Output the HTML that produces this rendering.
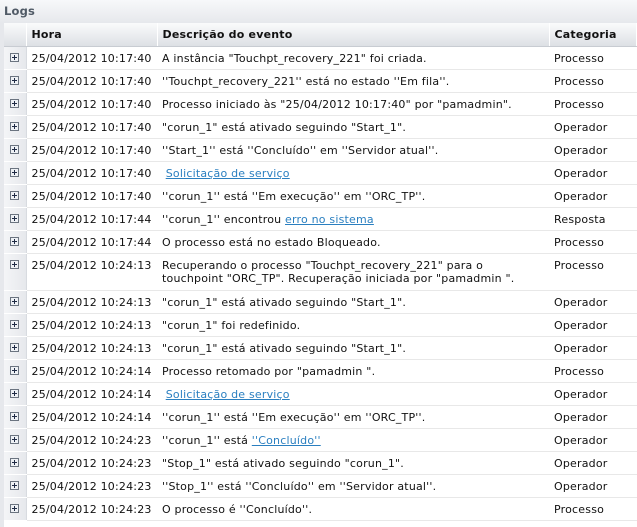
<!DOCTYPE html><html><head><style>
body{margin:0;width:637px;height:527px;overflow:hidden;background:#fff;font-family:"DejaVu Sans",Verdana,sans-serif;font-size:11px;letter-spacing:0.2px;color:#111}
.top{position:absolute;left:0;top:0;width:637px;height:23px;background:linear-gradient(#f7f8fa,#e6e8ec)}
.top span{position:absolute;left:4px;top:4px;font-weight:bold;color:#505a66;font-size:11.5px}
.left{position:absolute;left:0;top:23px;width:4px;height:504px;background:#e6e8ec}
table{position:absolute;left:4px;top:23px;border-collapse:collapse;width:633px}
th{height:22px;background:linear-gradient(#fafbfc,#dde0e5);text-align:left;font-weight:bold;padding:0 0 0 5px;border-right:1px solid #fff;border-bottom:1px solid #c8ccd2;vertical-align:middle}
td{height:22px;padding:0 0 0 5px;border-bottom:1px solid #e8e8e8;vertical-align:top;line-height:13px;padding-top:5px;box-sizing:border-box;white-space:nowrap}
td.i{width:22px;padding:5px 0 0 6px;background:linear-gradient(90deg,#f4f5f7,#e6e8ec);border-right:1px solid #d8dbe0;border-bottom:1px solid #fff}
.b{display:block;width:7px;height:7px;border:1px solid #6b7480;background:#eef1f5;position:relative;margin-top:1px}
.b:before{content:"";position:absolute;left:1px;top:3px;width:5px;height:1px;background:#1f2a44}
.b:after{content:"";position:absolute;left:3px;top:1px;width:1px;height:5px;background:#1f2a44}
a{color:#2a7fc0;text-decoration:underline}
tr{height:23px}
</style></head><body>
<div class="top"><span>Logs</span></div><div class="left"></div>
<table>
<tr><th style="width:17px;padding:0"></th><th style="width:125px">Hora</th><th style="width:386px">Descrição do evento</th><th>Categoria</th></tr>
<tr><td class="i"><i class="b"></i></td><td>25/04/2012 10:17:40</td><td>A instância "Touchpt_recovery_221" foi criada.</td><td>Processo</td></tr>
<tr><td class="i"><i class="b"></i></td><td>25/04/2012 10:17:40</td><td>''Touchpt_recovery_221'' está no estado ''Em fila''.</td><td>Processo</td></tr>
<tr><td class="i"><i class="b"></i></td><td>25/04/2012 10:17:40</td><td>Processo iniciado às "25/04/2012 10:17:40" por "pamadmin".</td><td>Processo</td></tr>
<tr><td class="i"><i class="b"></i></td><td>25/04/2012 10:17:40</td><td>"corun_1" está ativado seguindo "Start_1".</td><td>Operador</td></tr>
<tr><td class="i"><i class="b"></i></td><td>25/04/2012 10:17:40</td><td>''Start_1'' está ''Concluído'' em ''Servidor atual''.</td><td>Operador</td></tr>
<tr><td class="i"><i class="b"></i></td><td>25/04/2012 10:17:40</td><td>&nbsp;<a>Solicitação de serviço</a></td><td>Operador</td></tr>
<tr><td class="i"><i class="b"></i></td><td>25/04/2012 10:17:40</td><td>''corun_1'' está ''Em execução'' em ''ORC_TP''.</td><td>Operador</td></tr>
<tr><td class="i"><i class="b"></i></td><td>25/04/2012 10:17:44</td><td>''corun_1'' encontrou <a>erro no sistema</a></td><td>Resposta</td></tr>
<tr><td class="i"><i class="b"></i></td><td>25/04/2012 10:17:44</td><td>O processo está no estado Bloqueado.</td><td>Processo</td></tr>
<tr style="height:37px"><td class="i" style="height:37px"><i class="b"></i></td><td style="height:37px">25/04/2012 10:24:13</td><td style="height:37px">Recuperando o processo "Touchpt_recovery_221" para o<br>touchpoint "ORC_TP". Recuperação iniciada por "pamadmin ".</td><td style="height:37px">Processo</td></tr>
<tr><td class="i"><i class="b"></i></td><td>25/04/2012 10:24:13</td><td>"corun_1" está ativado seguindo "Start_1".</td><td>Operador</td></tr>
<tr><td class="i"><i class="b"></i></td><td>25/04/2012 10:24:13</td><td>"corun_1" foi redefinido.</td><td>Operador</td></tr>
<tr><td class="i"><i class="b"></i></td><td>25/04/2012 10:24:13</td><td>"corun_1" está ativado seguindo "Start_1".</td><td>Operador</td></tr>
<tr><td class="i"><i class="b"></i></td><td>25/04/2012 10:24:14</td><td>Processo retomado por "pamadmin ".</td><td>Processo</td></tr>
<tr><td class="i"><i class="b"></i></td><td>25/04/2012 10:24:14</td><td>&nbsp;<a>Solicitação de serviço</a></td><td>Operador</td></tr>
<tr><td class="i"><i class="b"></i></td><td>25/04/2012 10:24:14</td><td>''corun_1'' está ''Em execução'' em ''ORC_TP''.</td><td>Operador</td></tr>
<tr><td class="i"><i class="b"></i></td><td>25/04/2012 10:24:23</td><td>''corun_1'' está <a>''Concluído''</a></td><td>Operador</td></tr>
<tr><td class="i"><i class="b"></i></td><td>25/04/2012 10:24:23</td><td>"Stop_1" está ativado seguindo "corun_1".</td><td>Operador</td></tr>
<tr><td class="i"><i class="b"></i></td><td>25/04/2012 10:24:23</td><td>''Stop_1'' está ''Concluído'' em ''Servidor atual''.</td><td>Operador</td></tr>
<tr><td class="i"><i class="b"></i></td><td>25/04/2012 10:24:23</td><td>O processo é ''Concluído''.</td><td>Processo</td></tr>
</table>
</body></html>
